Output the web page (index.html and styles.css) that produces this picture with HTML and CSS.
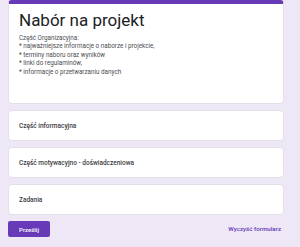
FILE: index.html
```html
<!DOCTYPE html>
<html lang="pl">
<head>
    <meta charset="UTF-8">
    <meta name="viewport" content="width=device-width, initial-scale=1.0">
    <title>Nabór na projekt</title>
    <link rel="stylesheet" href="styles.css">
</head>
<body>
    <div class="form">
        <div class="card header">
            <h1 class="title">Nabór na projekt</h1>
            <div class="desc">
                Część Organizacyjna:<br>
                * najważniejsze informacje o naborze i projekcie,<br>
                * terminy naboru oraz wyników<br>
                * linki do regulaminów,<br>
                * informacje o przetwarzaniu danych
            </div>
        </div>
        <div class="card section">Część informacyjna</div>
        <div class="card section">Część motywacyjno - doświadczeniowa</div>
        <div class="card section">Zadania</div>
        <div class="actions">
            <button class="submit">Prześlij</button>
            <a class="clear" href="#">Wyczyść formularz</a>
        </div>
    </div>
</body>
</html>
```

FILE: styles.css
```css
body {
    margin: 0;
    background-color: #ede7f6;
    font-family: Roboto, "Noto Sans", Arial, sans-serif;
    color: #202124;
}

.form {
    width: 276px;
    margin: 0 8px;
    display: flex;
    flex-direction: column;
    gap: 6px;
}

.card {
    background-color: #fff;
    border: 1px solid #e4e0ea;
    border-radius: 4px;
    box-sizing: border-box;
}

.header {
    height: 104px;
    border-top: 4px solid #673ab7;
    padding: 6px 10px;
}

.title {
    margin: 0;
    font-size: 17px;
    font-weight: 400;
    line-height: 20px;
}

.desc {
    margin-top: 4px;
    font-size: 6.3px;
    line-height: 8.4px;
    color: #4a4d52;
}

.section {
    height: 31px;
    padding: 0 10px;
    display: flex;
    align-items: center;
    font-size: 6.5px;
    font-weight: 500;
    color: #3c4043;
}

.actions {
    display: flex;
    justify-content: space-between;
    align-items: center;
}

.submit {
    width: 42px;
    height: 16px;
    padding: 0;
    border: none;
    border-radius: 2px;
    background-color: #673ab7;
    color: #fff;
    font-family: inherit;
    font-size: 6px;
    font-weight: 500;
}

.clear {
    margin-right: 3px;
    color: #673ab7;
    font-size: 6.2px;
    font-weight: 500;
    text-decoration: none;
}
```
